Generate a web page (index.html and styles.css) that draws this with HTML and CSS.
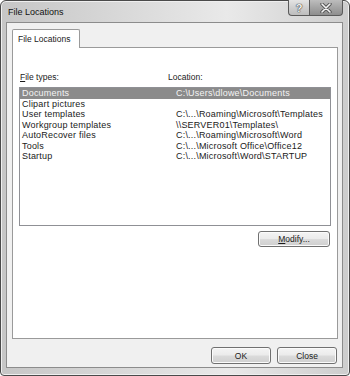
FILE: index.html
```html
<!DOCTYPE html>
<html lang="en">
<head>
  <meta charset="UTF-8" />
  <title>File Locations</title>
  <link rel="stylesheet" href="styles.css">
</head>
<body>

  <div class="window">
    <div class="titlebar">
      <span class="title">File Locations</span>
      <div class="caption">
        <span class="cap help">?</span>
        <span class="cap close">
          <svg width="12" height="10" viewBox="0 0 12 10">
            <path d="M2 1 L10 9 M10 1 L2 9" stroke="#555" stroke-width="3.4" stroke-linecap="round"/>
            <path d="M2 1 L10 9 M10 1 L2 9" stroke="#f4f4f4" stroke-width="1.6" stroke-linecap="round"/>
          </svg>
        </span>
      </div>
    </div>

    <div class="face">
      <div class="tabs">
        <span class="tab">File Locations</span>
      </div>

      <div class="panel">
        <div class="labels">
          <span class="col-types"><u>F</u>ile types:</span>
          <span>Location:</span>
        </div>

        <div class="list">
          <div class="row selected"><span>Documents</span><span>C:\Users\dlowe\Documents</span></div>
          <div class="row"><span>Clipart pictures</span><span></span></div>
          <div class="row"><span>User templates</span><span>C:\...\Roaming\Microsoft\Templates</span></div>
          <div class="row"><span>Workgroup templates</span><span>\\SERVER01\Templates\</span></div>
          <div class="row"><span>AutoRecover files</span><span>C:\...\Roaming\Microsoft\Word</span></div>
          <div class="row"><span>Tools</span><span>C:\...\Microsoft Office\Office12</span></div>
          <div class="row"><span>Startup</span><span>C:\...\Microsoft\Word\STARTUP</span></div>
        </div>

        <div class="panel-actions">
          <button class="btn btn-modify"><u>M</u>odify...</button>
        </div>
      </div>

      <div class="dialog-actions">
        <button class="btn">OK</button>
        <button class="btn">Close</button>
      </div>
    </div>
  </div>

</body>
</html>
```

FILE: styles.css
```css
html, body {
  margin: 0;
  padding: 0;
  background-color: #ffffff;
  font-family: "Liberation Sans", Arial, sans-serif;
  color: #1a1a1a;
}

.window {
  width: 350px;
  height: 376px;
  box-sizing: border-box;
  border: 1px solid #4a4a4a;
  border-radius: 6px 6px 4px 4px;
  padding: 0 6px 7px 5px;
  display: flex;
  flex-direction: column;
  background: linear-gradient(to right, #c6c6c6 0%, #dedede 45%, #e9e9e9 65%, #cdcdcd 100%);
  box-shadow: inset 0 0 0 1px #efefef;
}

.titlebar {
  height: 21px;
  display: flex;
  align-items: flex-start;
}

.title {
  padding-left: 2px;
  margin-top: 5px;
  font-size: 9px;
  line-height: 13px;
  color: #111;
}

.caption {
  margin-left: auto;
  margin-top: -1px;
  display: flex;
}

.cap {
  height: 16px;
  box-sizing: border-box;
  border: 1px solid #5a5a5a;
  border-top: none;
  display: flex;
  align-items: center;
  justify-content: center;
}

.help {
  width: 21px;
  border-radius: 0 0 0 4px;
  border-right: none;
  background: linear-gradient(#e4e4e4, #cfcfcf 50%, #bdbdbd);
  color: #f4f4f4;
  font-size: 11px;
  font-weight: bold;
  text-shadow: 0 0 1px #444, 0 0 1px #444, 0 0 1px #444;
}

.close {
  width: 34px;
  border-radius: 0 0 4px 0;
  background: linear-gradient(#bdbdbd, #a4a4a4 50%, #8e8e8e);
}

.face {
  flex: 1;
  border: 1px solid #8c8c8c;
  background-color: #f0f0f0;
  padding: 6px 4px 3px 5px;
  display: flex;
  flex-direction: column;
}

.tabs {
  display: flex;
}

.tab {
  height: 19px;
  box-sizing: border-box;
  margin-bottom: -1px;
  padding: 0 0 0 5px;
  border: 1px solid #9a9a9a;
  border-bottom: none;
  border-radius: 2px 2px 0 0;
  background-color: #ffffff;
  font-size: 8.5px;
  line-height: 18px;
  position: relative;
  width: 68px;
  white-space: nowrap;
}

.panel {
  height: 292px;
  box-sizing: border-box;
  border: 1px solid #9a9a9a;
  background-color: #ffffff;
  padding: 24px 6px 0 6px;
}

.labels {
  display: flex;
  font-size: 8.5px;
  line-height: 11px;
  margin-bottom: 4px;
}

.col-types {
  width: 148px;
  padding-left: 1px;
}

.list {
  height: 139px;
  box-sizing: border-box;
  border: 1px solid #8f9095;
  font-size: 9px;
  letter-spacing: 0.2px;
}

.row {
  display: grid;
  grid-template-columns: 156px 1fr;
  height: 10.5px;
  line-height: 10.5px;
  white-space: nowrap;
}

.row span:first-child {
  padding-left: 2px;
}

.row.selected {
  background-color: #8b8b8b;
  color: #f4f4f4;
}

.panel-actions {
  display: flex;
  justify-content: flex-end;
  margin-top: 5px;
  padding-right: 1px;
}

.btn {
  font-family: "Liberation Sans", Arial, sans-serif;
  font-size: 8.5px;
  color: #1a1a1a;
  height: 17px;
  width: 60px;
  padding: 0;
  border: 1px solid #707070;
  border-radius: 3px;
  background: linear-gradient(#f4f4f4 0%, #ebebeb 48%, #dbdbdb 52%, #cfcfcf 100%);
  box-shadow: inset 0 0 0 1px #fbfbfb;
}

.btn-modify {
  width: 72px;
  height: 16px;
}

.dialog-actions {
  display: flex;
  justify-content: flex-end;
  gap: 6px;
  margin-top: 8px;
  padding-right: 1px;
}
```
